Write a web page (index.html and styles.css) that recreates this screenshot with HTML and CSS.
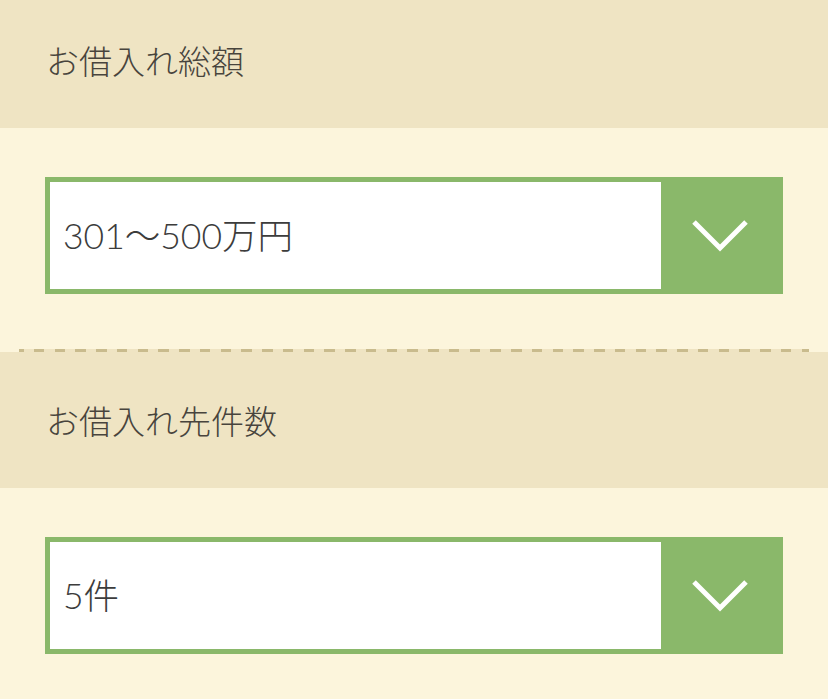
FILE: index.html
```html
<!DOCTYPE html>
<html>
    <head>
        <title>お借入れ情報</title>
        <meta name="viewport" content="width=device-width, initial-scale=1.0">
        <link rel="stylesheet" href="styles.css">
    </head>
    <body>
        <div id="form">
            <div class="label">お借入れ総額</div>
            <div class="field">
                <div class="select">
                    <div class="value">301〜500万円</div>
                    <div class="arrow">
                        <svg width="60" height="40" viewBox="0 0 60 40">
                            <polyline points="4,6 30,32 56,6" fill="none" stroke="#fff" stroke-width="5"/>
                        </svg>
                    </div>
                </div>
            </div>
            <div class="divider"></div>
            <div class="label">お借入れ先件数</div>
            <div class="field">
                <div class="select">
                    <div class="value">5件</div>
                    <div class="arrow">
                        <svg width="60" height="40" viewBox="0 0 60 40">
                            <polyline points="4,6 30,32 56,6" fill="none" stroke="#fff" stroke-width="5"/>
                        </svg>
                    </div>
                </div>
            </div>
        </div>
    </body>
</html>
```

FILE: styles.css
```css
body {
    margin: 0;
    font-family: "Noto Sans CJK JP", sans-serif;
    font-weight: 300;
    color: #444;
    background-color: #fcf5dc;
}
#form {
    margin-top: -8px;
}
.label {
    display: flex;
    align-items: center;
    height: 136px;
    padding-left: 46px;
    background-color: #efe4c3;
    font-size: 33px;
    line-height: 1;
    color: #48443d;
}
.field {
    padding: 49px 45px 54px;
    background-color: #fcf5dc;
}
.divider {
    height: 4px;
    background-color: #efe4c3;
    background-image: repeating-linear-gradient(to right, #c9bb8d 0, #c9bb8d 10.5px, transparent 10.5px, transparent 20.75px);
    background-position: 13px 0;
    background-clip: content-box;
    padding: 0 19px;
    box-shadow: inset 0 1px 0 #fcf5dc;
}
.select {
    display: flex;
    height: 117px;
    box-sizing: border-box;
    border: 5px solid #8ab86a;
    background-color: #fff;
}
.value {
    flex: 1;
    display: flex;
    align-items: center;
    padding-left: 13px;
    font-family: Lato, "Noto Sans CJK JP", sans-serif;
    font-size: 35.5px;
    line-height: 1;
    color: #3c3c3c;
}
.arrow {
    width: 117px;
    display: flex;
    align-items: center;
    justify-content: center;
    background-color: #8ab86a;
}
```
